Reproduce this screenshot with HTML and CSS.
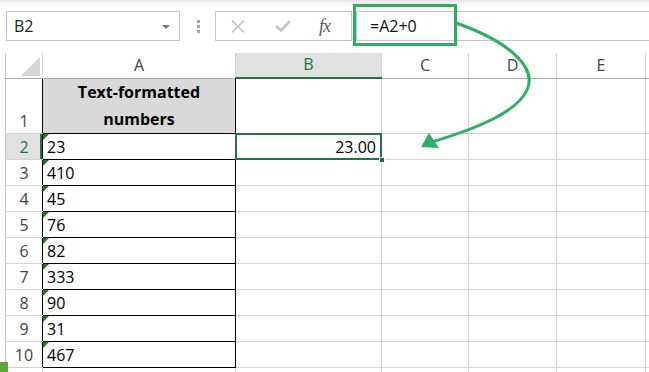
FILE: index.html
```html
<!DOCTYPE html>
<html lang="en">
<head>
    <meta charset="UTF-8">
    <title>Text-formatted numbers</title>
    <link rel="stylesheet" href="styles.css">
</head>
<body>
    <div class="toolbar">
        <div class="name-box">B2<span class="caret"></span></div>
        <div class="grip"><i></i><i></i><i></i></div>
        <div class="fx-group">
            <svg class="icon-cancel" width="14" height="13" viewBox="0 0 14 13"><path d="M1 0.5 L13 12.5 M13 0.5 L1 12.5" stroke="#c4c4c4" stroke-width="1.6" fill="none"/></svg>
            <svg class="icon-enter" width="16" height="12" viewBox="0 0 16 12"><path d="M1 6 L6 10.5 L15 1" stroke="#c4c4c4" stroke-width="2.6" fill="none"/></svg>
            <span class="fx">fx</span>
        </div>
        <div class="formula">=A2+0</div>
    </div>

    <table class="sheet">
        <colgroup>
            <col class="col-head">
            <col class="col-a">
            <col class="col-b">
            <col class="col-c">
            <col class="col-d">
            <col class="col-e">
            <col class="col-f">
        </colgroup>
        <tr class="head-row">
            <th class="corner"><svg width="19" height="19" viewBox="0 0 19 19"><polygon points="19,0 19,19 0,19" fill="#d6d6d6"/></svg></th>
            <th>A</th>
            <th class="active-col">B</th>
            <th>C</th>
            <th>D</th>
            <th>E</th>
            <th class="edge"></th>
        </tr>
        <tr class="tall">
            <th class="row-num">1</th>
            <td class="boxed title-cell">Text-formatted<br>numbers</td>
            <td></td><td></td><td></td><td></td><td class="edge"></td>
        </tr>
        <tr>
            <th class="row-num active-row">2</th>
            <td class="boxed flag">23</td>
            <td class="num selected">23.00<span class="handle"></span></td>
            <td></td><td></td><td></td><td class="edge"></td>
        </tr>
        <tr><th class="row-num">3</th><td class="boxed flag">410</td><td></td><td></td><td></td><td></td><td class="edge"></td></tr>
        <tr><th class="row-num">4</th><td class="boxed flag">45</td><td></td><td></td><td></td><td></td><td class="edge"></td></tr>
        <tr><th class="row-num">5</th><td class="boxed flag">76</td><td></td><td></td><td></td><td></td><td class="edge"></td></tr>
        <tr><th class="row-num">6</th><td class="boxed flag">82</td><td></td><td></td><td></td><td></td><td class="edge"></td></tr>
        <tr><th class="row-num">7</th><td class="boxed flag">333</td><td></td><td></td><td></td><td></td><td class="edge"></td></tr>
        <tr><th class="row-num">8</th><td class="boxed flag">90</td><td></td><td></td><td></td><td></td><td class="edge"></td></tr>
        <tr><th class="row-num">9</th><td class="boxed flag">31</td><td></td><td></td><td></td><td></td><td class="edge"></td></tr>
        <tr><th class="row-num">10</th><td class="boxed flag">467</td><td></td><td></td><td></td><td></td><td class="edge"></td></tr>
        <tr class="cut"><th class="row-num"></th><td></td><td></td><td></td><td></td><td></td><td class="edge"></td></tr>
    </table>

    <div class="callout"></div>
    <svg class="arrow" width="649" height="372" viewBox="0 0 649 372">
        <path d="M456 23 C505 40 538 66 527 90 C517 112 478 128 432 142" stroke="#2bb062" stroke-width="3" fill="none"/>
        <polygon points="421,147 429,133 439,148" fill="#2bb062"/>
    </svg>
    <div class="tab-mark"></div>
</body>
</html>
```

FILE: styles.css
```css
* {
    margin: 0;
    padding: 0;
    box-sizing: border-box;
}

body {
    font-family: 'Open Sans', 'Liberation Sans', sans-serif;
    font-size: 16px;
    color: #000;
    background-color: #fff;
    width: 649px;
    height: 372px;
    overflow: hidden;
    position: relative;
}

/* formula bar */

.toolbar {
    height: 53px;
    padding: 11px 0 0 6px;
    display: flex;
    align-items: flex-start;
    background: linear-gradient(#e4e4e4 0, #f6f6f6 3px, #fff 7px);
}

.name-box {
    width: 174px;
    height: 30px;
    border: 1px solid #c6c6c6;
    padding-left: 7px;
    display: flex;
    align-items: center;
    color: #222;
    position: relative;
}

.caret {
    position: absolute;
    right: 9px;
    top: 13px;
    border-left: 4px solid transparent;
    border-right: 4px solid transparent;
    border-top: 4px solid #7a7a7a;
}

.grip {
    margin: 9px 15px 0 17px;
    display: flex;
    flex-direction: column;
    gap: 2px;
}

.grip i {
    display: block;
    width: 3px;
    height: 3px;
    background-color: #a6a6a6;
}

.fx-group {
    width: 137px;
    height: 30px;
    border: 1px solid #c6c6c6;
    display: flex;
    align-items: center;
    padding-left: 15px;
}

.icon-enter {
    margin-left: 30px;
}

.fx {
    margin-left: 28px;
    font-family: 'Liberation Serif', serif;
    font-style: italic;
    font-size: 18px;
    color: #555;
    letter-spacing: -1px;
}

.formula {
    flex: 1;
    height: 30px;
    margin-left: 4px;
    border: 1px solid #c6c6c6;
    border-right: none;
    padding-left: 13px;
    display: flex;
    align-items: center;
    color: #111;
}

/* sheet grid */

.sheet {
    margin-left: 5px;
    border-collapse: collapse;
    table-layout: fixed;
    width: 644px;
}

.col-head { width: 37px; }
.col-a { width: 193px; }
.col-b { width: 146px; }
.col-c { width: 87px; }
.col-d { width: 88px; }
.col-e { width: 89px; }
.col-f { width: 4px; }

.sheet th,
.sheet td {
    border: 1px solid #d4d4d4;
    height: 26px;
    padding: 0 4px 1px;
    vertical-align: bottom;
    white-space: nowrap;
    font-weight: normal;
}

.sheet .edge {
    padding: 0;
    border-right: none;
}

.head-row th {
    height: 25px;
    border-top: none;
    border-bottom-color: #ababab;
    text-align: center;
    color: #444;
    padding-bottom: 2px;
}

.sheet .corner {
    border-left-color: #c4c4c4;
    padding: 0 2px 2px 0;
    text-align: right;
    line-height: 0;
}

.active-col {
    background-color: #e1e1e1;
    color: #217346 !important;
    border-bottom: 2px solid #217346 !important;
}

.row-num {
    text-align: center;
    color: #444;
    border-left-color: #c4c4c4 !important;
    border-right: none !important;
}

.active-row {
    background-color: #e1e1e1;
    color: #217346 !important;
    box-shadow: inset -2px 0 0 #217346;
}

.sheet .tall th,
.sheet .tall td {
    height: 55px;
}

.sheet .cut th,
.sheet .cut td {
    height: 5px;
    padding: 0;
    border-bottom: none;
}

.sheet .boxed {
    border: 1px solid #000;
    padding-left: 4px;
}

.sheet .title-cell {
    background-color: #d9d9d9;
    font-weight: bold;
    text-align: center;
    line-height: 27px;
    padding: 0;
}

.flag {
    position: relative;
}

.flag::before {
    content: "";
    position: absolute;
    left: 0;
    top: 0;
    border-top: 6px solid #1f7a1f;
    border-right: 6px solid transparent;
}

.num {
    text-align: right;
    padding-right: 5px !important;
}

.selected {
    position: relative;
}

.selected::after {
    content: "";
    position: absolute;
    left: -1px;
    top: -1px;
    right: -1px;
    bottom: -1px;
    border: 2px solid #217346;
}

.handle {
    position: absolute;
    right: -4px;
    bottom: -4px;
    width: 6px;
    height: 6px;
    background-color: #217346;
    border: 1px solid #fff;
    z-index: 1;
}

/* annotations drawn over the screenshot */

.callout {
    position: absolute;
    left: 353px;
    top: 4px;
    width: 104px;
    height: 42px;
    border: 3px solid #2bb062;
}

.arrow {
    position: absolute;
    left: 0;
    top: 0;
    pointer-events: none;
}

.tab-mark {
    position: absolute;
    left: 0;
    top: 362px;
    width: 8px;
    height: 10px;
    background-color: #5ea43a;
}
```
